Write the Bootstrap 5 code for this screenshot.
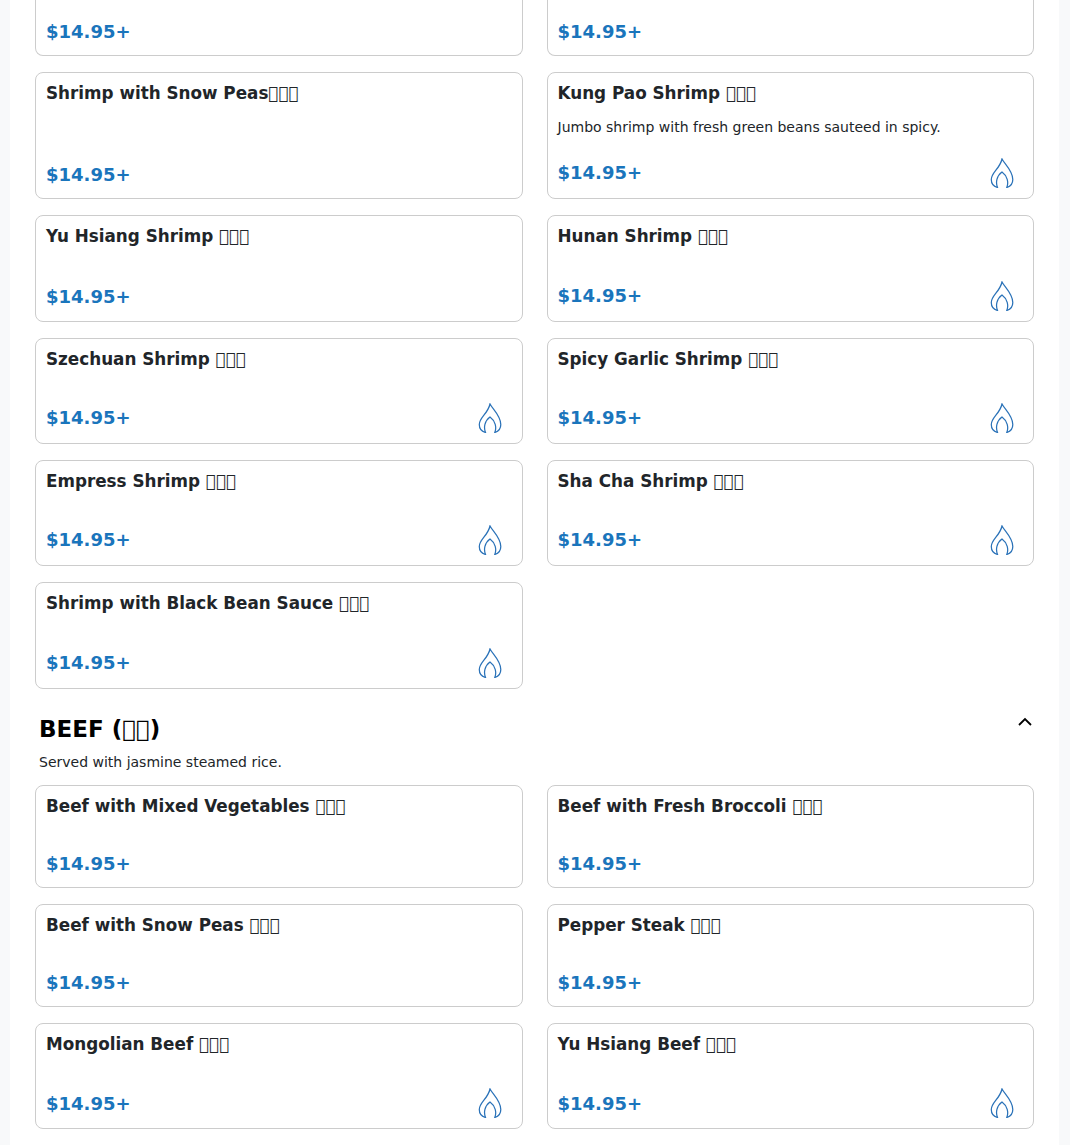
<!doctype html>
<html lang="en">
<head>
<meta charset="utf-8">
<title>Menu</title>
<link href="https://cdn.jsdelivr.net/npm/bootstrap@5.3.0/dist/css/bootstrap.min.css" rel="stylesheet">
<style>
html,body{height:1145px;overflow:hidden}
body{background:#f8f9fa;font-family:"DejaVu Sans",sans-serif;color:#212529}
.menu-sheet{background:#fff;margin:0 11px 0 10px;padding:0 25px;height:1145px}
.dish-row{margin-bottom:16px}
.dish{border:1px solid #ccc;border-radius:8px;padding:10px;height:100%;background:#fff}
.dish-cut{border-top:0;border-top-left-radius:0;border-top-right-radius:0;height:56px;padding-bottom:9.5px}
.dish-name{font-size:16.8px;line-height:20.16px;font-weight:700;margin:0 0 13.5px}
.dish-desc{font-size:14px;line-height:21px;margin:0 0 20.55px}
.dish-gap{height:20.7px}
.dish-foot{min-height:26.6px}
.dish-price{font-size:18px;font-weight:700;color:#1a75bc;line-height:26.1px;padding-top:.5px}
.flame{width:24px;height:30px;margin-right:9.5px;display:block;fill:none;stroke:#2a72b8;stroke-width:1.25}
.sect-title{font-size:23px;font-weight:700;color:#000;line-height:28px;margin:0}
.sect-note{font-size:14px;line-height:21px;margin:8.7px 0 12.3px;color:#212529}
.sect-head{padding:26.55px 2px 0 4px}
.chev{width:14px;height:14px;display:block;fill:none;stroke:#000;stroke-width:1.8}
</style>
</head>
<body>
<svg width="0" height="0" class="d-none"><symbol id="fl" viewBox="0 0 24 30"><path d="M7.500 29.500C3.800 28.500 1.300 25.800 1.300 21.500C1.300 14.500 10 10.500 12 1C14.500 6 22.800 12.500 22.800 21.500C22.800 25.800 20.200 28.500 16.800 29.500C18.800 24.500 17.500 18 12 14C6.500 18 5.500 24.500 7.500 29.500Z"/></symbol></svg>
<main class="menu-sheet">
  <div class="row gx-4 dish-row">
    <div class="col-6"><div class="dish dish-cut d-flex flex-column justify-content-end"><div class="dish-foot d-flex justify-content-between align-items-center"><span class="dish-price">$14.95+</span></div></div></div>
    <div class="col-6"><div class="dish dish-cut d-flex flex-column justify-content-end"><div class="dish-foot d-flex justify-content-between align-items-center"><span class="dish-price">$14.95+</span></div></div></div>
  </div>
  <div class="row gx-4 dish-row">
    <div class="col-6"><div class="dish d-flex flex-column"><h5 class="dish-name">Shrimp with Snow Peas&#xE000;&#xE000;&#xE000;</h5><div class="dish-foot d-flex justify-content-between align-items-center mt-auto"><span class="dish-price">$14.95+</span></div></div></div>
    <div class="col-6"><div class="dish d-flex flex-column"><h5 class="dish-name">Kung Pao Shrimp &#xE000;&#xE000;&#xE000;</h5><p class="dish-desc">Jumbo shrimp with fresh green beans sauteed in spicy.</p><div class="dish-foot d-flex justify-content-between align-items-center mt-auto"><span class="dish-price">$14.95+</span><svg class="flame"><use href="#fl"/></svg></div></div></div>
  </div>
  <div class="row gx-4 dish-row">
    <div class="col-6"><div class="dish d-flex flex-column"><h5 class="dish-name">Yu Hsiang Shrimp &#xE000;&#xE000;&#xE000;</h5><div class="dish-gap"></div><div class="dish-foot d-flex justify-content-between align-items-center mt-auto"><span class="dish-price">$14.95+</span></div></div></div>
    <div class="col-6"><div class="dish d-flex flex-column"><h5 class="dish-name">Hunan Shrimp &#xE000;&#xE000;&#xE000;</h5><div class="dish-gap"></div><div class="dish-foot d-flex justify-content-between align-items-center mt-auto"><span class="dish-price">$14.95+</span><svg class="flame"><use href="#fl"/></svg></div></div></div>
  </div>
  <div class="row gx-4 dish-row">
    <div class="col-6"><div class="dish d-flex flex-column"><h5 class="dish-name">Szechuan Shrimp &#xE000;&#xE000;&#xE000;</h5><div class="dish-gap"></div><div class="dish-foot d-flex justify-content-between align-items-center mt-auto"><span class="dish-price">$14.95+</span><svg class="flame"><use href="#fl"/></svg></div></div></div>
    <div class="col-6"><div class="dish d-flex flex-column"><h5 class="dish-name">Spicy Garlic Shrimp &#xE000;&#xE000;&#xE000;</h5><div class="dish-gap"></div><div class="dish-foot d-flex justify-content-between align-items-center mt-auto"><span class="dish-price">$14.95+</span><svg class="flame"><use href="#fl"/></svg></div></div></div>
  </div>
  <div class="row gx-4 dish-row">
    <div class="col-6"><div class="dish d-flex flex-column"><h5 class="dish-name">Empress Shrimp &#xE000;&#xE000;&#xE000;</h5><div class="dish-gap"></div><div class="dish-foot d-flex justify-content-between align-items-center mt-auto"><span class="dish-price">$14.95+</span><svg class="flame"><use href="#fl"/></svg></div></div></div>
    <div class="col-6"><div class="dish d-flex flex-column"><h5 class="dish-name">Sha Cha Shrimp &#xE000;&#xE000;&#xE000;</h5><div class="dish-gap"></div><div class="dish-foot d-flex justify-content-between align-items-center mt-auto"><span class="dish-price">$14.95+</span><svg class="flame"><use href="#fl"/></svg></div></div></div>
  </div>
  <div class="row gx-4">
    <div class="col-6"><div class="dish d-flex flex-column"><h5 class="dish-name">Shrimp with Black Bean Sauce &#xE000;&#xE000;&#xE000;</h5><div class="dish-gap"></div><div class="dish-foot d-flex justify-content-between align-items-center mt-auto"><span class="dish-price">$14.95+</span><svg class="flame"><use href="#fl"/></svg></div></div></div>
  </div>
  <div class="sect-head">
    <div class="d-flex justify-content-between align-items-start"><h3 class="sect-title">BEEF (&#xE000;&#xE000;)</h3><svg class="chev" viewBox="0 0 14 14"><path d="M1 10L7 4L13 10"/></svg></div>
    <p class="sect-note">Served with jasmine steamed rice.</p>
  </div>
  <div class="row gx-4 dish-row">
    <div class="col-6"><div class="dish d-flex flex-column"><h5 class="dish-name">Beef with Mixed Vegetables &#xE000;&#xE000;&#xE000;</h5><div class="dish-gap"></div><div class="dish-foot d-flex justify-content-between align-items-center mt-auto"><span class="dish-price">$14.95+</span></div></div></div>
    <div class="col-6"><div class="dish d-flex flex-column"><h5 class="dish-name">Beef with Fresh Broccoli &#xE000;&#xE000;&#xE000;</h5><div class="dish-gap"></div><div class="dish-foot d-flex justify-content-between align-items-center mt-auto"><span class="dish-price">$14.95+</span></div></div></div>
  </div>
  <div class="row gx-4 dish-row">
    <div class="col-6"><div class="dish d-flex flex-column"><h5 class="dish-name">Beef with Snow Peas &#xE000;&#xE000;&#xE000;</h5><div class="dish-gap"></div><div class="dish-foot d-flex justify-content-between align-items-center mt-auto"><span class="dish-price">$14.95+</span></div></div></div>
    <div class="col-6"><div class="dish d-flex flex-column"><h5 class="dish-name">Pepper Steak &#xE000;&#xE000;&#xE000;</h5><div class="dish-gap"></div><div class="dish-foot d-flex justify-content-between align-items-center mt-auto"><span class="dish-price">$14.95+</span></div></div></div>
  </div>
  <div class="row gx-4 dish-row">
    <div class="col-6"><div class="dish d-flex flex-column"><h5 class="dish-name">Mongolian Beef &#xE000;&#xE000;&#xE000;</h5><div class="dish-gap"></div><div class="dish-foot d-flex justify-content-between align-items-center mt-auto"><span class="dish-price">$14.95+</span><svg class="flame"><use href="#fl"/></svg></div></div></div>
    <div class="col-6"><div class="dish d-flex flex-column"><h5 class="dish-name">Yu Hsiang Beef &#xE000;&#xE000;&#xE000;</h5><div class="dish-gap"></div><div class="dish-foot d-flex justify-content-between align-items-center mt-auto"><span class="dish-price">$14.95+</span><svg class="flame"><use href="#fl"/></svg></div></div></div>
  </div>
</main>
<script src="https://cdn.jsdelivr.net/npm/bootstrap@5.3.0/dist/js/bootstrap.bundle.min.js"></script>
</body>
</html>
